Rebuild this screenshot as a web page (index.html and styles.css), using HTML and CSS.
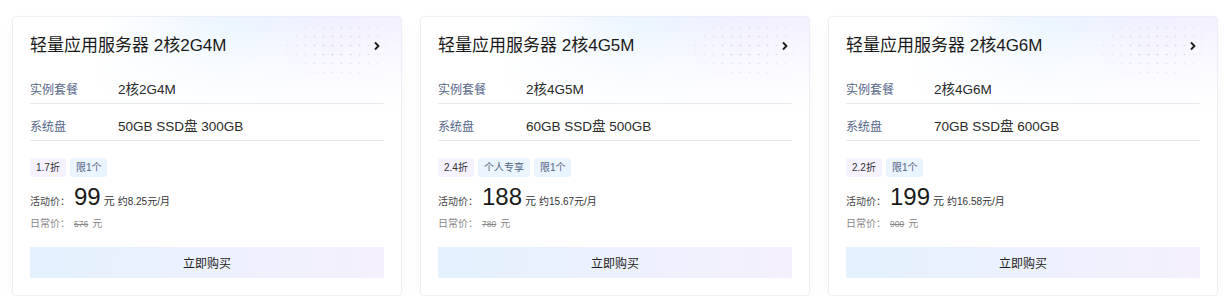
FILE: index.html
```html
<!DOCTYPE html>
<html lang="zh-CN">
<head>
<meta charset="utf-8">
<title>轻量应用服务器</title>
<link rel="stylesheet" href="styles.css">
</head>
<body>
<main class="cards">
  <section class="card">
    <div class="card-dots"></div>
    <header class="card-head">
      <h3 class="card-title">轻量应用服务器 2核2G4M</h3>
      <svg class="chev" width="8" height="10" viewBox="0 0 8 10"><path d="M2 1.5 L5.5 5 L2 8.5" fill="none" stroke="#1a1a1a" stroke-width="1.8"/></svg>
    </header>
    <dl class="specs">
      <div class="spec"><dt>实例套餐</dt><dd>2核2G4M</dd></div>
      <div class="spec"><dt>系统盘</dt><dd>50GB SSD盘 300GB</dd></div>
    </dl>
    <div class="tags"><span class="tag tag-discount">1.7折</span><span class="tag tag-info">限1个</span></div>
    <div class="price"><span class="price-label">活动价：</span><span class="price-num">99</span><span class="price-unit">元</span><span class="price-month">约8.25元/月</span></div>
    <div class="orig"><span class="orig-label">日常价：</span><s class="orig-num">576</s><span class="orig-unit">元</span></div>
    <button class="buy">立即购买</button>
  </section>
  <section class="card">
    <div class="card-dots"></div>
    <header class="card-head">
      <h3 class="card-title">轻量应用服务器 2核4G5M</h3>
      <svg class="chev" width="8" height="10" viewBox="0 0 8 10"><path d="M2 1.5 L5.5 5 L2 8.5" fill="none" stroke="#1a1a1a" stroke-width="1.8"/></svg>
    </header>
    <dl class="specs">
      <div class="spec"><dt>实例套餐</dt><dd>2核4G5M</dd></div>
      <div class="spec"><dt>系统盘</dt><dd>60GB SSD盘 500GB</dd></div>
    </dl>
    <div class="tags"><span class="tag tag-discount">2.4折</span><span class="tag tag-info">个人专享</span><span class="tag tag-info">限1个</span></div>
    <div class="price"><span class="price-label">活动价：</span><span class="price-num">188</span><span class="price-unit">元</span><span class="price-month">约15.67元/月</span></div>
    <div class="orig"><span class="orig-label">日常价：</span><s class="orig-num">780</s><span class="orig-unit">元</span></div>
    <button class="buy">立即购买</button>
  </section>
  <section class="card">
    <div class="card-dots"></div>
    <header class="card-head">
      <h3 class="card-title">轻量应用服务器 2核4G6M</h3>
      <svg class="chev" width="8" height="10" viewBox="0 0 8 10"><path d="M2 1.5 L5.5 5 L2 8.5" fill="none" stroke="#1a1a1a" stroke-width="1.8"/></svg>
    </header>
    <dl class="specs">
      <div class="spec"><dt>实例套餐</dt><dd>2核4G6M</dd></div>
      <div class="spec"><dt>系统盘</dt><dd>70GB SSD盘 600GB</dd></div>
    </dl>
    <div class="tags"><span class="tag tag-discount">2.2折</span><span class="tag tag-info">限1个</span></div>
    <div class="price"><span class="price-label">活动价：</span><span class="price-num">199</span><span class="price-unit">元</span><span class="price-month">约16.58元/月</span></div>
    <div class="orig"><span class="orig-label">日常价：</span><s class="orig-num">900</s><span class="orig-unit">元</span></div>
    <button class="buy">立即购买</button>
  </section>
</main>
</body>
</html>
```

FILE: styles.css
```css
* { box-sizing: border-box; }
html, body { margin: 0; background: #fff; }
body {
  font-family: "Liberation Sans", "Noto Sans CJK SC", sans-serif;
  color: #1f1f1f;
}
.cards {
  display: flex;
  gap: 18px;
  padding: 16px 11px 0 12px;
}
.card {
  position: relative;
  width: 390px;
  height: 280px;
  border: 1px solid #eceef3;
  border-radius: 4px;
  padding: 0 17px 17px;
  background:
    linear-gradient(180deg, rgba(255,255,255,0) 0, rgba(255,255,255,0.6) 50px, #fff 95px),
    linear-gradient(100deg, #fff 20%, #eaf5ff 50%, #f1f0ff 75%, #f6f2ff 100%);
  box-shadow: 0 4px 12px rgba(0, 0, 0, 0.035);
  display: flex;
  flex-direction: column;
  overflow: hidden;
}
.card-dots {
  position: absolute;
  top: 6px;
  right: 8px;
  width: 110px;
  height: 62px;
  background-image: radial-gradient(circle, rgba(175, 170, 230, 0.4) 0.8px, transparent 1.2px);
  background-size: 9px 9px;
  -webkit-mask-image: radial-gradient(ellipse 60% 60% at 50% 40%, #000 25%, transparent 100%);
  mask-image: radial-gradient(ellipse 60% 60% at 50% 40%, #000 25%, transparent 100%);
}
.card-head {
  position: relative;
  display: flex;
  align-items: center;
  justify-content: space-between;
  padding: 17px 3px 10px 0;
  height: 50px;
}
.card-title {
  margin: 0;
  font-size: 17px;
  font-weight: 400;
  line-height: 22px;
  color: #1a1a1a;
}
.chev { display: block; }
.specs { margin: 0; }
.spec {
  display: flex;
  align-items: center;
  height: 37px;
  padding-top: 6px;
  border-bottom: 1px solid #e6e9ef;
}
.spec dt {
  width: 88px;
  font-size: 12px;
  color: #56678a;
}
.spec dd {
  margin: 0;
  font-size: 13.5px;
  color: #2a2a2a;
}
.tags {
  display: flex;
  gap: 4px;
  margin-top: 17px;
}
.tag {
  height: 19px;
  line-height: 19px;
  padding: 0 6px;
  font-size: 10px;
  border-radius: 3px;
}
.tag-discount { background: #f6f2ff; color: #333; }
.tag-info { background: #eaf5ff; color: #4e5f80; }
.price {
  display: flex;
  align-items: baseline;
  margin-top: 5px;
  height: 30px;
  line-height: 30px;
}
.price-label { font-size: 10px; color: #444; width: 44px; }
.price-num { font-size: 24px; color: #1a1a1a; margin-right: 3px; }
.price-unit { font-size: 11px; color: #333; margin-right: 3px; }
.price-month { font-size: 10px; color: #333; }
.orig {
  display: flex;
  align-items: baseline;
  height: 16px;
  line-height: 16px;
  margin-top: 4px;
  color: #888;
}
.orig-label { font-size: 10px; width: 44px; }
.orig-num { font-size: 8.5px; margin-right: 4px; }
.orig-unit { font-size: 10px; }
.buy {
  margin-top: auto;
  height: 31px;
  width: 100%;
  border: 0;
  border-radius: 0;
  background: linear-gradient(90deg, #e4f1ff 0%, #ebf1fd 45%, #f5f0fd 100%);
  font-family: inherit;
  font-size: 12px;
  color: #1f1f1f;
  cursor: pointer;
}
```
